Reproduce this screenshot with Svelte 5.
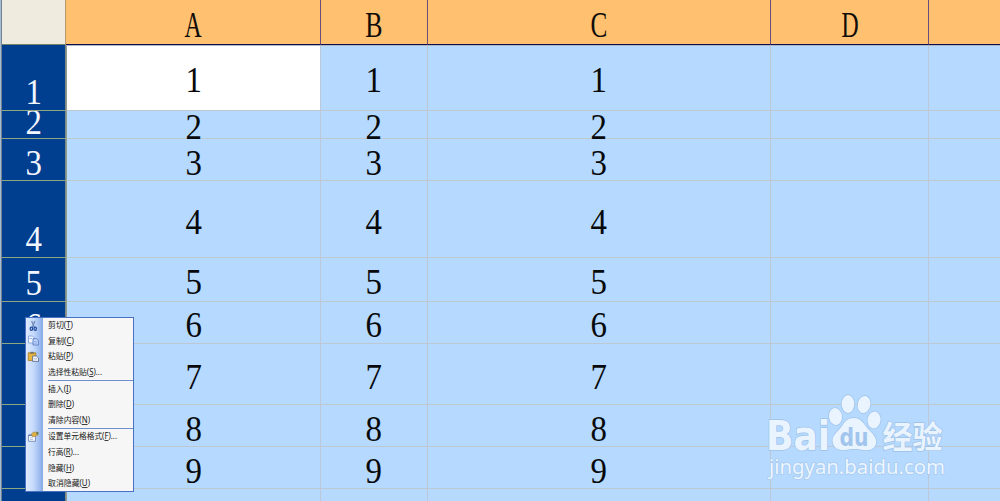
<script>
  const columns = [
    { name: 'A', sx: 0.66 },
    { name: 'B', sx: 0.72 },
    { name: 'C', sx: 0.7 },
    { name: 'D', sx: 0.66 },
    { name: '', sx: 1 }
  ];
  // head / cell: vertical shift of the digit inside its row
  const rows = [
    { n: '1', h: 66, head: 28, cell: 16 },
    { n: '2', h: 28, head: -8, cell: -3 },
    { n: '3', h: 42, head: 5, cell: 5 },
    { n: '4', h: 77, head: 39, cell: 22 },
    { n: '5', h: 44, head: 6, cell: 5 },
    { n: '6', h: 42, head: 5, cell: 4 },
    { n: '7', h: 61, head: 24, cell: 14 },
    { n: '8', h: 42, head: 5, cell: 5 },
    { n: '9', h: 42, head: 5, cell: 5 },
    { n: '', h: 13, head: 0, cell: 0 }
  ];
  const groups = [
    [
      { t: '剪切', k: 'T', icon: 'cut', w: 25 },
      { t: '复制', k: 'C', icon: 'copy', w: 26 },
      { t: '粘贴', k: 'P', icon: 'paste', w: 25 },
      { t: '选择性粘贴', k: 'S', more: true, w: 54 }
    ],
    [
      { t: '插入', k: 'I', w: 23 },
      { t: '删除', k: 'D', w: 26 },
      { t: '清除内容', k: 'N', w: 42 }
    ],
    [
      { t: '设置单元格格式', k: 'F', icon: 'format', more: true, w: 69 },
      { t: '行高', k: 'R', more: true, w: 31 },
      { t: '隐藏', k: 'H', w: 26 },
      { t: '取消隐藏', k: 'U', w: 42 }
    ]
  ];
</script>

<div class="app">
  <div class="edge"></div>
  <div class="sheet">
    <div class="row top">
      <div class="corner"></div>
      {#each columns as c}
        <div class="colhead"><span style="transform: scaleX({c.sx})">{c.name}</span></div>
      {/each}
    </div>
    {#each rows as r, i}
      <div class="row" style="height: {r.h}px">
        <div class="rowhead"><span style="margin-top: {r.head}px">{r.n}</span></div>
        {#each columns as c, j}
          <div class="cell" class:active={i === 0 && j === 0}>
            {#if j < 3}<span style="margin-top: {r.cell}px">{r.n}</span>{/if}
          </div>
        {/each}
      </div>
    {/each}
  </div>

  <svg class="mark" width="200" height="100" viewBox="0 0 200 100">
    <g class="logo">
      <text x="6" y="70" font-size="40" font-weight="700" textLength="64" lengthAdjust="spacingAndGlyphs">Bai</text>
      <ellipse cx="75.5" cy="36.5" rx="6.5" ry="8.5" transform="rotate(-8 75.5 36.5)" />
      <ellipse cx="88" cy="24" rx="6.3" ry="9" />
      <ellipse cx="104" cy="24.5" rx="6.3" ry="8.7" transform="rotate(12 104 24.5)" />
      <ellipse cx="114" cy="40" rx="6.5" ry="8.5" transform="rotate(8 114 40)" />
      <path d="M94 38C101 38 104 44 108 49C113 54 117 58 116 63C115 70 108 71 103 70Q94 68 86 70C79 71 73 68 72.5 61C72 55 78 52 82 46C85 41 88 38 94 38Z" />
      <text class="cn" x="122.5" y="67.5" font-size="31" font-weight="700" textLength="60" lengthAdjust="spacingAndGlyphs">经验</text>
    </g>
    <text class="du" x="79.5" y="65.5" font-size="25" textLength="29" lengthAdjust="spacingAndGlyphs">du</text>
    <text class="url" x="9" y="93.5" font-size="20" textLength="176" lengthAdjust="spacingAndGlyphs">jingyan.baidu.com</text>
  </svg>

  <div class="menu">
    {#each groups as g, gi}
      {#if gi > 0}<div class="sep"></div>{/if}
      {#each g as m}
        <div class="item">
          <div class="icon">
            <svg width="12" height="12" viewBox="0 0 12 12">
              {#if m.icon === 'cut'}
                <path d="M4.6 1L7.4 7.5M8 1L5.2 7.5" stroke="#6b87b5" stroke-width="1.2" fill="none" />
                <ellipse cx="4.4" cy="8.7" rx="1.2" ry="1.6" fill="none" stroke="#244da0" stroke-width="1.3" />
                <ellipse cx="8.2" cy="8.7" rx="1.2" ry="1.6" fill="none" stroke="#244da0" stroke-width="1.3" />
              {:else if m.icon === 'copy'}
                <path d="M1.5 1h4L7 2.5v5.5H1.5z" fill="#eef5ff" stroke="#7b9dda" stroke-width=".8" />
                <path d="M6 3.7h3.5l1.8 1.8V10H6z" fill="#c5d9ff" stroke="#4b70b9" stroke-width=".8" />
                <path d="M2.5 3.5h2.5M7.3 6.5h2.5M7.3 8.2h2.5" stroke="#6e96dc" stroke-width=".7" />
              {:else if m.icon === 'paste'}
                <path d="M1.2 1.8h7.6v7.8H1.2z" fill="#eab53c" stroke="#a37a2b" stroke-width=".8" />
                <path d="M3.2 .8h3.6v2H3.2z" fill="#777568" />
                <path d="M5.6 5H9.4l2.1 2v3.4H5.6z" fill="#f2f5fa" stroke="#52658b" stroke-width=".8" />
                <path d="M7.2 7.8h2.7" stroke="#7c92b8" stroke-width=".7" />
              {:else if m.icon === 'format'}
                <path d="M1.5 4h7v6.3h-7z" fill="#f4f7fb" stroke="#6680ac" stroke-width=".8" />
                <path d="M1.5 4.3h7" stroke="#506f9e" stroke-width="1" />
                <path d="M4.3 3L6.3 1.2H11V4L8.3 5.5h-3z" fill="#dfae48" stroke="#a58743" stroke-width=".6" />
                <path d="M9.3 1h2v2.5h-2z" fill="#5e8057" />
                <path d="M3 6.7h3M3 8.5h3" stroke="#a3b2ca" stroke-width=".7" />
              {/if}
            </svg>
          </div>
          <svg class="label" width="80" height="15" viewBox="0 0 80 15">
            <text x="0" y="10.2" textLength={m.w} lengthAdjust="spacingAndGlyphs">{m.t}(<tspan text-decoration="underline">{m.k}</tspan>){m.more ? '...' : ''}</text>
          </svg>
        </div>
      {/each}
    {/each}
  </div>
</div>

<style>
  :global(body) { margin: 0; overflow: hidden; }
  .app {
    position: relative;
    display: flex;
    width: 1000px;
    height: 501px;
    overflow: hidden;
    background: #b5d9ff;
    font-family: 'Liberation Serif', serif;
  }
  .edge { width: 2px; flex: none; box-sizing: border-box; background: #a5bcd6; border-right: 1px solid #73828c; }
  .sheet { flex: 1; display: flex; flex-direction: column; }
  .row { display: grid; flex: none; grid-template-columns: 64px 254.5px 107.5px 343px 158px 1fr; }
  .top { height: 45px; }
  .row div { box-sizing: border-box; }
  .corner { background: #efebde; border-right: 1px solid #b49c70; border-bottom: 1px solid #73826b; }
  .colhead {
    display: flex;
    justify-content: center;
    padding-top: 7px;
    background: #ffc06f;
    border-right: 1px solid #6a4b7c;
    border-bottom: 1px solid #100c50;
    box-shadow: 0 1px #a8b7c7;
    font-size: 36px;
    line-height: 36px;
    color: #100c08;
    z-index: 1;
  }
  .colhead:last-child { border-right: 0; }
  .colhead span { height: 36px; }
  .rowhead, .cell {
    display: flex;
    justify-content: center;
    align-items: flex-start;
    min-height: 0;
    font-size: 35px;
    line-height: 39px;
  }
  .rowhead span, .cell span { height: 39px; transform: scaleX(.94); }
  .rowhead { overflow: hidden; background: #003e8f; color: #f2f7ff; border-bottom: 1px solid #8da780; border-right: 1px solid #7d8b80; }
  .cell { color: #08090b; border-right: 1px solid #bec8d5; border-bottom: 1px solid #bec8d3; }
  .cell:nth-child(2) { border-left: 1px solid #8f9a90; }
  .cell:last-child { border-right: 0; }
  .active { background: #fff; }

  .mark { position: absolute; left: 760px; top: 380px; }
  .logo { fill: #e9f4ff; stroke: #9fc2e8; stroke-width: 1.4px; paint-order: stroke; font-family: 'DejaVu Sans', sans-serif; }
  .cn { font-family: 'Noto Sans CJK SC', sans-serif; }
  .du { fill: #a1c5ed; font-family: 'DejaVu Sans', sans-serif; font-weight: 700; }
  .url { fill: #edf6ff; stroke: #a3c6eb; stroke-width: 1.2px; paint-order: stroke; font-family: 'Noto Sans', 'Open Sans', sans-serif; }

  .menu {
    position: absolute;
    left: 25px;
    top: 317px;
    width: 109px;
    height: 175px;
    box-sizing: border-box;
    display: flex;
    flex-direction: column;
    border: 1px solid #4a70c4;
    background: linear-gradient(90deg, #dfebff 0, #c2d8fb 8px, #86a9e6 17px, #f6f6f6 17px);
  }
  .item { display: flex; align-items: center; height: 15.6px; flex: none; }
  .icon { display: flex; width: 22px; padding-left: 1px; box-sizing: border-box; }
  .label { display: block; font-family: 'Noto Sans', 'Noto Sans CJK SC', sans-serif; font-size: 8.4px; fill: #161616; }
  .sep { height: 1px; flex: none; width: 85px; margin-left: 22px; background: #6f90cf; }
</style>
